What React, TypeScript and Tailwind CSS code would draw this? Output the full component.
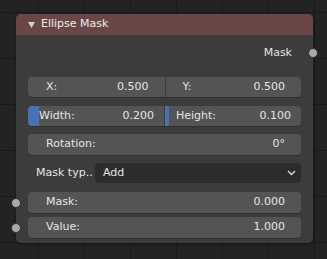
import React from 'react';

const font = { fontFamily: '"DejaVu Sans", "Liberation Sans", sans-serif' };

function Socket({ side }: { side: 'left' | 'right' }) {
  return (
    <div
      className={`absolute top-1/2 -translate-y-1/2 w-[10px] h-[10px] rounded-full bg-[#a8a8a8] border border-[#303030] ${
        side === 'left' ? '-left-[17px]' : '-right-[17px]'
      }`}
    />
  );
}

function Field({ label, value, socket }: { label: string; value: string; socket?: boolean }) {
  return (
    <div className="relative h-[21px] rounded-[4px] bg-[#545454] shadow-[0_1px_0_#2f2f2f] flex items-center justify-between pl-[18px] pr-[16px]">
      {socket && <Socket side="left" />}
      <span>{label}</span>
      <span>{value}</span>
    </div>
  );
}

export default function App() {
  return (
    <div
      className="relative w-[327px] h-[259px] overflow-hidden bg-[#232323] bg-[linear-gradient(to_right,#1a1a1a_1px,transparent_1px),linear-gradient(to_bottom,#1a1a1a_1px,transparent_1px)] bg-[size:46px_46px] bg-[position:38px_12px] text-[11px] text-[#e4e4e4]"
      style={font}
    >
      {/* node */}
      <div className="absolute left-[16px] top-[14px] w-[297px] h-[229px] rounded-[5px] bg-[#3e3e3e]/95 shadow-[0_1px_3px_rgba(0,0,0,0.5)]">
        <div className="h-[21px] rounded-t-[5px] bg-[#6a4646] flex items-center pl-[12px] gap-[6px]">
          <svg width="7" height="6" viewBox="0 0 7 6">
            <path d="M0 0 H7 L3.5 6 Z" fill="#d2d2d2" />
          </svg>
          <span className="text-[#ececec]">Ellipse Mask</span>
        </div>

        <div className="relative mt-[9px] h-[18px] flex items-center justify-end pr-[21px]">
          <span>Mask</span>
          <div className="absolute right-[-5px] top-1/2 -translate-y-1/2 w-[10px] h-[10px] rounded-full bg-[#a8a8a8] border border-[#303030]" />
        </div>

        <div className="px-[12px] mt-[15px] flex flex-col">
          {/* X / Y */}
          <div className="h-[20px] rounded-[4px] bg-[#545454] shadow-[0_1px_0_#2f2f2f] flex">
            <div className="flex-1 flex items-center justify-between pl-[18px] pr-[16px] border-r border-[#3c3c3c]">
              <span>X:</span>
              <span>0.500</span>
            </div>
            <div className="flex-1 flex items-center justify-between pl-[17px] pr-[16px]">
              <span>Y:</span>
              <span>0.500</span>
            </div>
          </div>

          {/* Width / Height */}
          <div className="mt-[9px] h-[20px] rounded-[4px] bg-[#545454] shadow-[0_1px_0_#2f2f2f] flex overflow-hidden">
            <div className="flex-1 flex items-center border-r border-[#3c3c3c]">
              <div className="w-[11px] h-full bg-[#4772b3]" />
              <div className="flex-1 flex items-center justify-between pr-[10px]">
                <span>Width:</span>
                <span>0.200</span>
              </div>
            </div>
            <div className="flex-1 flex items-center">
              <div className="w-[4px] h-full bg-[#4772b3]" />
              <div className="flex-1 flex items-center justify-between pl-[7px] pr-[10px]">
                <span>Height:</span>
                <span>0.100</span>
              </div>
            </div>
          </div>

          {/* Rotation */}
          <div className="mt-[8px]">
            <Field label="Rotation:" value="0°" />
          </div>

          {/* Mask type */}
          <div className="mt-[8px] h-[20px] flex items-center">
            <span className="w-[67px] pl-[8px] shrink-0">Mask typ..</span>
            <div className="flex-1 h-full rounded-[4px] bg-[#2c2c2c] flex items-center justify-between pl-[8px] pr-[5px]">
              <span>Add</span>
              <svg width="9" height="6" viewBox="0 0 9 6">
                <path d="M1 1 L4.5 4.5 L8 1" fill="none" stroke="#d8d8d8" strokeWidth="1.4" />
              </svg>
            </div>
          </div>

          <div className="mt-[9px]">
            <Field label="Mask:" value="0.000" socket />
          </div>
          <div className="mt-[4px]">
            <Field label="Value:" value="1.000" socket />
          </div>
        </div>
      </div>
    </div>
  );
}
